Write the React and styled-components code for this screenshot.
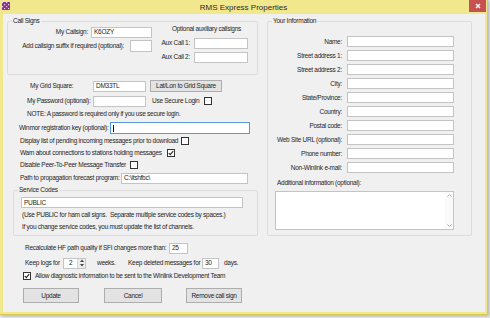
import React from "react";
import styled, { createGlobalStyle } from "styled-components";

const GlobalStyle = createGlobalStyle`
  html, body {
    margin: 0;
    padding: 0;
    background: #e9e9e9;
  }
  body {
    font-family: "Liberation Sans", Arial, sans-serif;
    font-size: 6.5px;
    letter-spacing: -0.27px;
    color: #1e1e1e;
  }
`;

const Screen = styled.div`
  width: 490px;
  height: 318px;
  overflow: hidden;
`;

const Window = styled.div`
  width: 488px;
  height: 315px;
  box-sizing: border-box;
  display: flex;
  flex-direction: column;
  background: #f1e78c;
  border-right: 1px solid #d9cb55;
  border-bottom: 1px solid #d9cb55;
  box-shadow: 1px 1px 3px rgba(0, 0, 0, 0.25);
`;

const TitleBar = styled.div`
  height: 14px;
  flex: none;
  display: grid;
  grid-template-columns: 1fr auto 1fr;
  align-items: start;
`;

const TitleIcon = styled.svg`
  margin: 2px 0 0 2px;
  display: block;
`;

const TitleText = styled.div`
  font-size: 8px;
  letter-spacing: 0;
  line-height: 9px;
  margin-top: 3px;
  color: #2b2b2b;
`;

const CloseButton = styled.div`
  justify-self: end;
  width: 17px;
  height: 12px;
  margin-right: 1px;
  background: #c75050;
  display: flex;
  align-items: center;
  justify-content: center;
`;

const Client = styled.div`
  flex: 1;
  margin: 0 2px 2px 3px;
  background: #f0f0f0;
  display: flex;
  align-items: flex-start;
`;

const Column = styled.div`
  width: ${(p) => p.$w}px;
  margin-left: ${(p) => p.$ml || 0}px;
  display: flex;
  flex-direction: column;
  flex: none;
`;

const Group = styled.div`
  box-sizing: border-box;
  width: ${(p) => p.$w}px;
  height: ${(p) => p.$h}px;
  margin-top: ${(p) => p.$mt || 0}px;
  margin-left: ${(p) => p.$ml || 0}px;
  border: 1px solid #dcdcdc;
  border-radius: 2px;
  display: flex;
  flex-direction: column;
`;

const Legend = styled.div`
  align-self: flex-start;
  margin: -5px 0 0 4px;
  padding: 0 1px;
  height: 8px;
  line-height: 8px;
  background: #f0f0f0;
  white-space: nowrap;
`;

const Row = styled.div`
  display: flex;
  align-items: center;
  height: ${(p) => p.$h || 12}px;
  margin-top: ${(p) => p.$mt || 0}px;
  padding-left: ${(p) => p.$pl || 0}px;
  flex: none;
`;

const Text = styled.span`
  display: block;
  line-height: 8px;
  white-space: nowrap;
  flex: none;
  width: ${(p) => (p.$w ? `${p.$w}px` : "auto")};
  text-align: ${(p) => (p.$right ? "right" : "left")};
  margin-left: ${(p) => p.$ml || 0}px;
  padding-right: ${(p) => p.$pr || 0}px;
  box-sizing: border-box;
`;

const Field = styled.div`
  box-sizing: border-box;
  flex: none;
  width: ${(p) => p.$w}px;
  height: ${(p) => p.$h || 11}px;
  margin-left: ${(p) => p.$ml || 0}px;
  background: #fff;
  border: 1px solid ${(p) => (p.$focus ? "#5b9ad8" : "#c4c4c4")};
  display: flex;
  align-items: center;
  padding-left: ${(p) => p.$pad ?? 2}px;
  line-height: 8px;
  white-space: nowrap;
  overflow: hidden;
`;

const Caret = styled.span`
  width: 1px;
  height: 7px;
  background: #111;
`;

const SpinArrows = styled.div`
  margin-left: auto;
  width: 7px;
  height: 9px;
  display: flex;
  flex-direction: column;
  justify-content: space-around;
  border-left: 1px solid #d6d6d6;
  background: #ececec;
`;

const Check = styled.div`
  box-sizing: border-box;
  flex: none;
  width: 8px;
  height: 8px;
  margin-left: ${(p) => p.$ml || 0}px;
  background: #fff;
  border: 1px solid #333;
  display: flex;
  align-items: center;
  justify-content: center;
`;

const Button = styled.div`
  box-sizing: border-box;
  flex: none;
  width: ${(p) => p.$w}px;
  height: ${(p) => p.$h || 15}px;
  margin-left: ${(p) => p.$ml || 0}px;
  background: #e3e3e3;
  border: 1px solid #adadad;
  display: flex;
  align-items: center;
  justify-content: center;
  line-height: 8px;
  white-space: nowrap;
`;

const InfoGrid = styled.div`
  display: grid;
  grid-template-columns: 72px 107px;
  grid-auto-rows: 11px;
  column-gap: 5px;
  row-gap: 3px;
  margin: 11px 0 0 2px;
  align-items: center;
`;

const TextArea = styled.div`
  box-sizing: border-box;
  width: 179px;
  height: 39px;
  margin: 4px 0 0 7px;
  background: #fff;
  border: 1px solid #c4c4c4;
  display: flex;
  justify-content: flex-end;
`;

const ScrollTrack = styled.div`
  width: 8px;
  display: flex;
  flex-direction: column;
  justify-content: space-between;
  align-items: center;
  padding: 2px 0;
  background: #fafafa;
`;

const Split = styled.div`
  display: flex;
`;

const Stack = styled.div`
  display: flex;
  flex-direction: column;
  width: ${(p) => p.$w}px;
`;

const CheckMark = () => (
  <svg width="6" height="6" viewBox="0 0 6 6">
    <path d="M0.8 3.1 L2.3 4.6 L5.2 1.2" fill="none" stroke="#222" strokeWidth="1.1" />
  </svg>
);

const Chevron = ({ up }) => (
  <svg width="5" height="3" viewBox="0 0 5 3">
    <path d={up ? "M0.5 2.6 L2.5 0.6 L4.5 2.6" : "M0.5 0.4 L2.5 2.4 L4.5 0.4"} fill="none" stroke="#9a9a9a" strokeWidth="0.8" />
  </svg>
);

const SpinTri = ({ up }) => (
  <svg width="6" height="3" viewBox="0 0 6 3" style={{ margin: "0 auto", display: "block" }}>
    <path d={up ? "M1 3 L3 0.6 L5 3 Z" : "M1 0 L3 2.4 L5 0 Z"} fill="#444" />
  </svg>
);

const AppIcon = () => (
  <TitleIcon width="8" height="8" viewBox="0 0 8 8">
    <rect width="8" height="8" fill="#8e2f8e" />
    {[0, 1, 2, 3].map((r) =>
      [0, 1, 2, 3].map((c) =>
        (r + c) % 2 === 0 ? (
          <rect key={`${r}-${c}`} x={c * 2} y={r * 2} width="1.2" height="1.2" fill="#f3d8f3" />
        ) : null
      )
    )}
  </TitleIcon>
);

const infoFields = [
  "Name:",
  "Street address 1:",
  "Street address 2:",
  "City:",
  "State/Province:",
  "Country:",
  "Postal code:",
  "Web Site URL (optional):",
  "Phone number:",
  "Non-Winlink e-mail:",
];

const App = () => {
  return (
    <Screen>
      <GlobalStyle />
      <Window>
        <TitleBar>
          <AppIcon />
          <TitleText>RMS Express Properties</TitleText>
          <CloseButton>
            <svg width="6" height="6" viewBox="0 0 6 6">
              <path d="M1 1 L5 5 M5 1 L1 5" stroke="#fff" strokeWidth="1.4" />
            </svg>
          </CloseButton>
        </TitleBar>

        <Client>
          <Column $w={255}>
            <Group $w={251} $h={54} $mt={7} $ml={4}>
              <Legend>Call Signs</Legend>
              <Split>
                <Stack $w={144}>
                  <Row $mt={1}>
                    <Text $w={80} $right>My Callsign:</Text>
                    <Field $w={61} $ml={3}>K6OZY</Field>
                  </Row>
                  <Row $mt={2}>
                    <Text $w={116} $right>Add callsign suffix if required (optional):</Text>
                    <Field $w={22} $h={12} $ml={6} />
                  </Row>
                </Stack>
                <Stack $w={96}>
                  <Row $h={8}>
                    <Text $w={89} $right>Optional auxiliary callsigns</Text>
                  </Row>
                  <Row $mt={4}>
                    <Text $w={38} $right>Aux Call 1:</Text>
                    <Field $w={54} $ml={4} />
                  </Row>
                  <Row $mt={2}>
                    <Text $w={38} $right>Aux Call 2:</Text>
                    <Field $w={54} $ml={4} />
                  </Row>
                </Stack>
              </Split>
            </Group>

            <Row $mt={5} $pl={27}>
              <Text $w={63}>My Grid Square:</Text>
              <Field $w={53}>DM33TL</Field>
              <Button $w={72} $h={12} $ml={4}>Lat/Lon to Grid Square</Button>
            </Row>
            <Row $mt={3} $pl={24}>
              <Text $w={66}>My Password (optional):</Text>
              <Field $w={53} />
              <Text $w={52} $ml={6}>Use Secure Login</Text>
              <Check />
            </Row>
            <Row $mt={1} $pl={24}>
              <Text>NOTE: A password is required only if you use secure login.</Text>
            </Row>
            <Row $mt={2} $pl={16}>
              <Text $w={91}>Winmor registration key (optional):</Text>
              <Field $w={140} $h={12} $focus>
                <Caret />
              </Field>
            </Row>
            <Row $mt={1} $pl={17}>
              <Text $w={161}>Display list of pending incoming messages prior to download</Text>
              <Check />
            </Row>
            <Row $pl={17}>
              <Text $w={147}>Warn about connections to stations holding messages</Text>
              <Check>
                <CheckMark />
              </Check>
            </Row>
            <Row $pl={17}>
              <Text $w={110}>Disable Peer-To-Peer Message Transfer</Text>
              <Check />
            </Row>
            <Row $mt={1} $pl={17}>
              <Text $w={101}>Path to propagation forecast program:</Text>
              <Field $w={127}>C:\itshfbc\</Field>
            </Row>

            <Group $w={245} $h={46} $mt={6} $ml={10}>
              <Legend>Service Codes</Legend>
              <Row $mt={3} $h={11} $pl={7}>
                <Field $w={222}>PUBLIC</Field>
              </Row>
              <Row $mt={2} $h={10} $pl={8}>
                <Text>(Use PUBLIC for ham call signs.&nbsp; Separate multiple service codes by spaces.)</Text>
              </Row>
              <Row $mt={2} $h={10} $pl={8}>
                <Text>If you change service codes, you must update the list of channels.</Text>
              </Row>
            </Group>

            <Row $mt={6} $pl={22}>
              <Text $w={144}>Recalculate HF path quality if SFI changes more than:</Text>
              <Field $w={19}>25</Field>
            </Row>
            <Row $mt={3} $pl={22}>
              <Text $w={38}>Keep logs for</Text>
              <Field $w={23} $pad={5}>
                2
                <SpinArrows>
                  <SpinTri up />
                  <SpinTri />
                </SpinArrows>
              </Field>
              <Text $w={31} $ml={11}>weeks.</Text>
              <Text $w={74}>Keep deleted messages for</Text>
              <Field $w={17}>30</Field>
              <Text $ml={5}>days.</Text>
            </Row>
            <Row $mt={1} $pl={20}>
              <Check>
                <CheckMark />
              </Check>
              <Text $ml={4}>Allow diagnostic information to be sent to the Winlink Development Team</Text>
            </Row>
            <Row $mt={6} $h={15} $pl={20}>
              <Button $w={56}>Update</Button>
              <Button $w={58} $ml={25}>Cancel</Button>
              <Button $w={56} $ml={24}>Remove call sign</Button>
            </Row>
          </Column>

          <Column $w={205} $ml={9}>
            <Group $w={205} $h={215} $mt={7}>
              <Legend>Your Information</Legend>
              <InfoGrid>
                {infoFields.map((label) => (
                  <React.Fragment key={label}>
                    <Text $right>{label}</Text>
                    <Field $w={107} />
                  </React.Fragment>
                ))}
              </InfoGrid>
              <Row $mt={6} $h={8} $pl={9}>
                <Text>Additional information (optional):</Text>
              </Row>
              <TextArea>
                <ScrollTrack>
                  <Chevron up />
                  <Chevron />
                </ScrollTrack>
              </TextArea>
            </Group>
          </Column>
        </Client>
      </Window>
    </Screen>
  );
};

export default App;
